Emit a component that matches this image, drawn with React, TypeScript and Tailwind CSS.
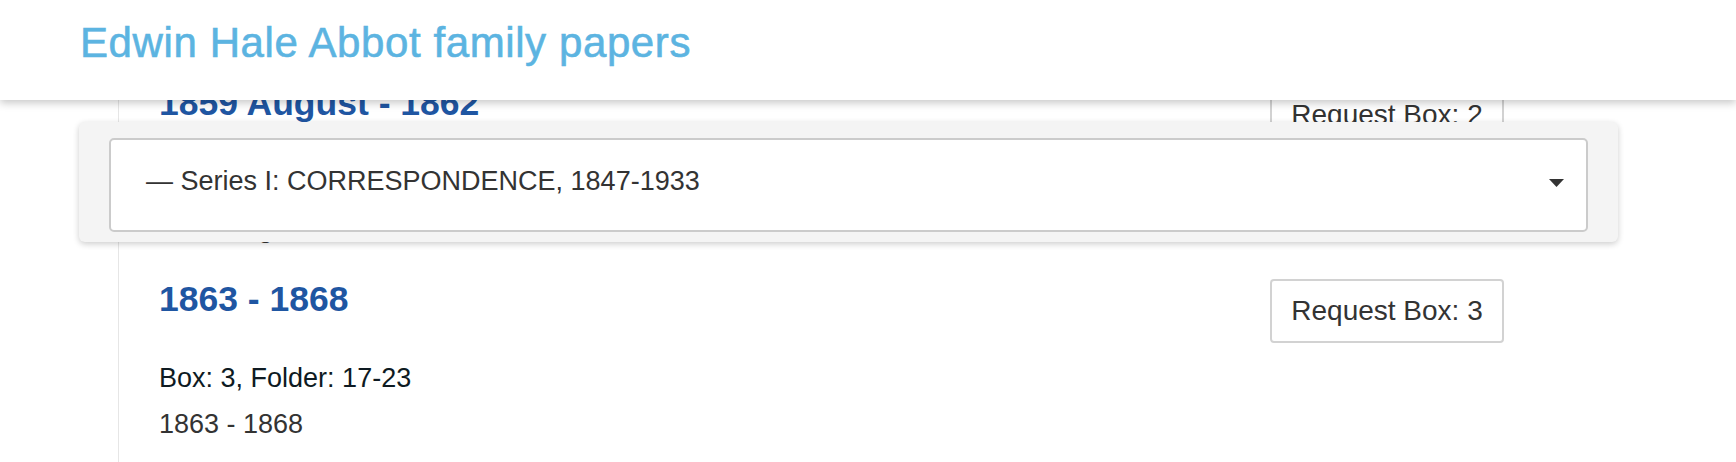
import React from "react";

const items = [
  { title: "1859 August - 1862", box: "2", folder: "10-16" },
  { title: "1863 - 1868", box: "3", folder: "17-23" },
];

export default function App() {
  return (
    <div
      className="relative h-[462px] w-[1736px] overflow-hidden bg-white"
      style={{ fontFamily: '"Liberation Sans", Arial, sans-serif' }}
    >
      {/* scrolling content */}
      <div className="ml-[118px] h-[462px] w-[1386px] border-l border-[#e6e6e6] pl-10 pt-[83px]">
        {items.map((it) => (
          <div key={it.title} className="mb-[28px]">
            <div className="flex items-start justify-between">
              <h3 className="text-[35.5px] font-bold leading-[40px] text-[#1f56a2]">{it.title}</h3>
              <button className="flex h-[64px] w-[234px] items-center justify-center rounded-[4px] border-2 border-[#d2d2d2] bg-white text-[28px] leading-[30px] text-[#333333]">
                Request Box: {it.box}
              </button>
            </div>
            <div className="mt-3 text-[27px] leading-[46px] text-[#0e1a22]">
              Box: {it.box}, Folder: {it.folder}
            </div>
            <div className="text-[27px] leading-[46px] text-[#333333]">{it.title}</div>
          </div>
        ))}
      </div>

      {/* sticky header */}
      <div className="absolute left-0 top-0 h-[100px] w-full bg-white pl-[80px] pt-[19px] shadow-[0_3px_8px_rgba(0,0,0,0.22)]">
        <h1 className="text-[42px] leading-[48px] tracking-[0.6px] text-[#5cb4e1] [-webkit-text-stroke:0.6px_#5cb4e1]">
          Edwin Hale Abbot family papers
        </h1>
      </div>

      {/* sticky series selector */}
      <div className="absolute left-[79px] top-[122px] w-[1539px] rounded-[6px] bg-[#f4f4f4] px-[30px] pb-[10px] pt-[16px] shadow-[0_2px_6px_rgba(0,0,0,0.2)]">
        <div className="flex h-[94px] items-start justify-between rounded-[5px] border-2 border-[#cbcbcb] bg-white pl-[35px] pr-[22px] pt-[26px]">
          <span className="text-[27px] leading-[30px] text-[#333333]">— Series I: CORRESPONDENCE, 1847-1933</span>
          <svg width="15" height="8" viewBox="0 0 15 8" className="mt-[13px]">
            <path d="M0 0 L15 0 L7.5 8 Z" fill="#333333" />
          </svg>
        </div>
      </div>
    </div>
  );
}
